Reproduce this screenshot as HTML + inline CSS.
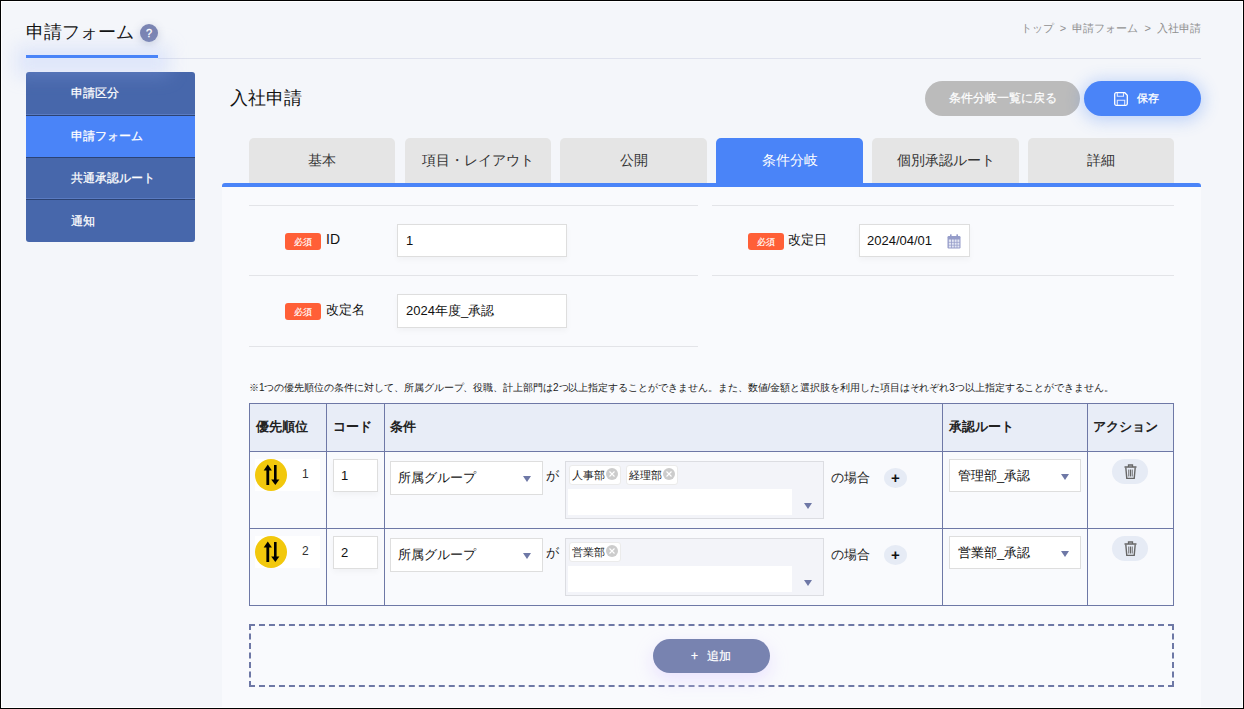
<!DOCTYPE html>
<html><head><meta charset="utf-8">
<style>
*{box-sizing:border-box;margin:0;padding:0}
html,body{width:1244px;height:709px;overflow:hidden}
body{font-family:"Liberation Sans",sans-serif;background:#f4f6fa;position:relative;color:#222}
.frame{position:absolute;left:0;top:0;width:1244px;height:709px;border:1px solid #000;z-index:50;pointer-events:none}
.frame2{position:absolute;left:1px;top:1px;width:1242px;height:707px;border:1px solid #fff;z-index:50}
.a{position:absolute;white-space:nowrap}
.inp{background:#fff;border:1px solid #dedede;color:#111;box-shadow:0 3px 6px rgba(0,0,0,.035)}
</style></head><body>
<div class="frame"></div><div class="frame2"></div>

<!-- header -->
<div class="a" style="left:26px;top:21px;font-size:18px;line-height:22px;color:#111">申請フォーム</div>
<div class="a" style="left:140px;top:24px;width:18px;height:18px;border-radius:50%;background:#7a84b2;color:#fff;font-size:11px;-webkit-text-stroke:0.3px #fff;text-align:center;line-height:18px;box-shadow:0 2px 8px rgba(80,90,140,.25)">?</div>
<div class="a" style="left:158px;top:58px;width:1043px;height:1px;background:#dfe2ee"></div>
<div class="a" style="left:26px;top:55px;width:132px;height:3px;background:#4a84f8;z-index:5"></div>
<div class="a" style="left:16px;top:46px;width:154px;height:30px;background:rgba(160,185,250,.25);filter:blur(9px);z-index:4"></div>
<div class="a" style="right:43px;top:20px;font-size:11px;line-height:16px;color:#909090">トップ &nbsp;&gt;&nbsp; 申請フォーム &nbsp;&gt;&nbsp; 入社申請</div>

<!-- sidebar -->
<div class="a" style="left:26px;top:72px;width:169px;height:170px;background:#4767ab;border-radius:3px;overflow:hidden">
  <div class="a" style="left:0;top:0;width:169px;height:44px;border-bottom:1px solid #2c4374;box-shadow:inset 0 -1px 0 #5a7bc2;color:#fff;-webkit-text-stroke:0.25px #fff;font-size:12px;line-height:42px;padding-left:45px">申請区分</div>
  <div class="a" style="left:0;top:44px;width:169px;height:42px;background:#4a84f8;border-bottom:1px solid #2c4374;color:#fff;-webkit-text-stroke:0.25px #fff;font-size:12px;line-height:41px;padding-left:45px">申請フォーム</div>
  <div class="a" style="left:0;top:86px;width:169px;height:42px;border-bottom:1px solid #2c4374;box-shadow:inset 0 -1px 0 #5a7bc2;color:#fff;-webkit-text-stroke:0.25px #fff;font-size:12px;line-height:41px;padding-left:45px">共通承認ルート</div>
  <div class="a" style="left:0;top:128px;width:169px;height:42px;color:#fff;-webkit-text-stroke:0.25px #fff;font-size:12px;line-height:43px;padding-left:45px">通知</div>
</div>

<!-- page title -->
<div class="a" style="left:230px;top:87px;font-size:18px;line-height:22px;color:#111">入社申請</div>
<div class="a" style="left:925px;top:81px;width:155px;height:35px;border-radius:18px;background:#bbbbbb;color:#fff;-webkit-text-stroke:0.25px #fff;font-size:12px;line-height:35px;text-align:center;-webkit-text-stroke:0.2px #fff">条件分岐一覧に戻る</div>
<div class="a" style="left:1084px;top:81px;width:117px;height:35px;border-radius:18px;background:#4a84f8;color:#fff;font-size:11px;-webkit-text-stroke:0.3px #fff;line-height:35px;box-shadow:0 2px 16px 3px rgba(74,132,248,.3)">
  <svg style="position:absolute;left:30px;top:11px" width="14" height="14" viewBox="0 0 14 14"><path d="M2.2 0.7h8.6l2.5 2.5v8.6a1.5 1.5 0 0 1-1.5 1.5H2.2a1.5 1.5 0 0 1-1.5-1.5V2.2a1.5 1.5 0 0 1 1.5-1.5z" fill="none" stroke="#fff" stroke-width="1.3"/><path d="M3.3 1v3.2h6.2V1" fill="none" stroke="#dfe8ff" stroke-width="1.1"/><path d="M3.3 13V8.2h7.4V13" fill="none" stroke="#dfe8ff" stroke-width="1.1"/></svg>
  <span style="position:absolute;left:53px;top:0">保存</span>
</div>

<!-- tabs -->
<div class="a" style="left:249px;top:138px;width:146px;height:45px;background:#e5e5e5;border-radius:5px 5px 0 0;color:#333;font-size:14px;line-height:45px;text-align:center">基本</div>
<div class="a" style="left:405px;top:138px;width:146px;height:45px;background:#e5e5e5;border-radius:5px 5px 0 0;color:#333;font-size:14px;line-height:45px;text-align:center">項目・レイアウト</div>
<div class="a" style="left:560px;top:138px;width:147px;height:45px;background:#e5e5e5;border-radius:5px 5px 0 0;color:#333;font-size:14px;line-height:45px;text-align:center">公開</div>
<div class="a" style="left:716px;top:138px;width:147px;height:45px;background:#4a84f8;border-radius:5px 5px 0 0;color:#fff;font-size:14px;line-height:45px;text-align:center">条件分岐</div>
<div class="a" style="left:872px;top:138px;width:147px;height:45px;background:#e5e5e5;border-radius:5px 5px 0 0;color:#333;font-size:14px;line-height:45px;text-align:center">個別承認ルート</div>
<div class="a" style="left:1028px;top:138px;width:146px;height:45px;background:#e5e5e5;border-radius:5px 5px 0 0;color:#333;font-size:14px;line-height:45px;text-align:center">詳細</div>


<!-- content panel -->
<div class="a" style="left:222px;top:183px;width:979px;height:530px;background:#f9fafd;border-top:4px solid #4a84f8;border-radius:3px 3px 0 0"></div>

<!-- form rows -->
<div class="a" style="left:249px;top:205px;width:449px;height:1px;background:#e3e4e8"></div>
<div class="a" style="left:249px;top:275px;width:449px;height:1px;background:#e3e4e8"></div>
<div class="a" style="left:249px;top:346px;width:449px;height:1px;background:#e3e4e8"></div>
<div class="a" style="left:712px;top:205px;width:462px;height:1px;background:#e3e4e8"></div>
<div class="a" style="left:712px;top:275px;width:462px;height:1px;background:#e3e4e8"></div>
<div class="a" style="left:285px;top:233px;width:36px;height:17px;background:#ff5f37;border-radius:3px;color:#fff;-webkit-text-stroke:0.15px #fff;font-size:9px;line-height:19px;text-align:center">必須</div>
<div class="a" style="left:326px;top:230px;font-size:14px;line-height:18px;color:#111">ID</div>
<div class="a inp" style="left:397px;top:224px;width:170px;height:33px;font-size:13px;line-height:31px;padding-left:8px">1</div>
<div class="a" style="left:285px;top:303px;width:36px;height:17px;background:#ff5f37;border-radius:3px;color:#fff;-webkit-text-stroke:0.15px #fff;font-size:9px;line-height:19px;text-align:center">必須</div>
<div class="a" style="left:326px;top:301px;font-size:13px;line-height:18px;color:#111">改定名</div>
<div class="a inp" style="left:397px;top:294px;width:170px;height:34px;font-size:13px;line-height:32px;padding-left:8px">2024年度_承認</div>
<div class="a" style="left:748px;top:233px;width:36px;height:17px;background:#ff5f37;border-radius:3px;color:#fff;-webkit-text-stroke:0.15px #fff;font-size:9px;line-height:19px;text-align:center">必須</div>
<div class="a" style="left:788px;top:231px;font-size:13px;line-height:18px;color:#111">改定日</div>
<div class="a inp" style="left:859px;top:224px;width:111px;height:33px;font-size:13px;line-height:31px;padding-left:7px">2024/04/01
<svg style="position:absolute;left:87px;top:9px" width="14" height="15" viewBox="0 0 14 15"><rect x="0.5" y="2" width="13" height="12.5" rx="1.2" fill="#959cc9"/><rect x="3" y="0.3" width="1.6" height="3" rx=".5" fill="#959cc9"/><rect x="9.4" y="0.3" width="1.6" height="3" rx=".5" fill="#959cc9"/><g fill="#e3e6f3"><rect x="1.8" y="5.5" width="2.2" height="2.4"/><rect x="4.8" y="5.5" width="2" height="2.4"/><rect x="7.6" y="5.5" width="2" height="2.4"/><rect x="10.4" y="5.5" width="2" height="2.4"/><rect x="1.8" y="8.6" width="2.2" height="2.2"/><rect x="4.8" y="8.6" width="2" height="2.2"/><rect x="7.6" y="8.6" width="2" height="2.2"/><rect x="10.4" y="8.6" width="2" height="2.2"/><rect x="1.8" y="11.5" width="2.2" height="2"/><rect x="4.8" y="11.5" width="2" height="2"/><rect x="7.6" y="11.5" width="2" height="2"/><rect x="10.4" y="11.5" width="2" height="2"/></g></svg></div>

<div class="a" style="left:249px;top:381px;font-size:10px;line-height:13px;color:#222;letter-spacing:-0.05px">※1つの優先順位の条件に対して、所属グループ、役職、計上部門は2つ以上指定することができません。また、数値/金額と選択肢を利用した項目はそれぞれ3つ以上指定することができません。</div>

<!-- table -->
<div class="a" style="left:249px;top:403px;width:925px;height:48px;background:#e8edf7"></div>
<div class="a" style="left:249px;top:403px;width:925px;height:1px;background:#6e78a6"></div>
<div class="a" style="left:249px;top:451px;width:925px;height:1px;background:#6e78a6"></div>
<div class="a" style="left:249px;top:528px;width:925px;height:1px;background:#6e78a6"></div>
<div class="a" style="left:249px;top:605px;width:925px;height:1px;background:#6e78a6"></div>
<div class="a" style="left:249px;top:403px;width:1px;height:203px;background:#6e78a6"></div>
<div class="a" style="left:326px;top:403px;width:1px;height:203px;background:#6e78a6"></div>
<div class="a" style="left:384px;top:403px;width:1px;height:203px;background:#6e78a6"></div>
<div class="a" style="left:942px;top:403px;width:1px;height:203px;background:#6e78a6"></div>
<div class="a" style="left:1087px;top:403px;width:1px;height:203px;background:#6e78a6"></div>
<div class="a" style="left:1173px;top:403px;width:1px;height:203px;background:#6e78a6"></div>
<div class="a" style="left:256px;top:419px;font-size:13px;line-height:16px;font-weight:bold;color:#222">優先順位</div>
<div class="a" style="left:333px;top:419px;font-size:13px;line-height:16px;font-weight:bold;color:#222">コード</div>
<div class="a" style="left:390px;top:419px;font-size:13px;line-height:16px;font-weight:bold;color:#222">条件</div>
<div class="a" style="left:949px;top:419px;font-size:13px;line-height:16px;font-weight:bold;color:#222">承認ルート</div>
<div class="a" style="left:1093px;top:419px;font-size:13px;line-height:16px;font-weight:bold;color:#222">アクション</div>
<div class="a" style="left:255px;top:459px;width:65px;height:32px;background:#fff"></div>
<div class="a" style="left:255px;top:459px;width:32px;height:32px;border-radius:50%;background:#f2c80c">
<svg style="position:absolute;left:0;top:0" width="32" height="32" viewBox="0 0 32 32"><g fill="#000"><rect x="11.4" y="10" width="2.8" height="16"/><path d="M12.8 5.4L8.7 11.4h8.2z"/><rect x="19" y="6" width="2.6" height="16"/><path d="M20.3 25.9L16.2 20.6h8.2z"/></g></svg></div>
<div class="a" style="left:302px;top:466px;font-size:12px;line-height:16px;color:#333">1</div>
<div class="a inp" style="left:333px;top:459px;width:45px;height:33px;font-size:13px;line-height:31px;padding-left:7px">1</div>
<div class="a inp" style="left:390px;top:461px;width:153px;height:34px;font-size:13px;line-height:32px;padding-left:7px;box-shadow:none">所属グループ<span style="position:absolute;left:132px;top:14px;line-height:0"><svg width="8" height="6" viewBox="0 0 8 6"><path d="M0 0h8L4 6z" fill="#6e78a6"/></svg></span></div>
<div class="a" style="left:546px;top:468px;font-size:13px;line-height:16px;color:#222">が</div>
<div class="a" style="left:565px;top:461px;width:259px;height:58px;background:#f3f4f9;border:1px solid #dcdde2">
<div class="a" style="left:2px;top:27px;width:224px;height:26px;background:#fff"></div>
<span class="a" style="left:238px;top:41px;line-height:0"><svg width="8" height="6" viewBox="0 0 8 6"><path d="M0 0h8L4 6z" fill="#6e78a6"/></svg></span>
<div class="a" style="left:3px;top:3px;width:52px;height:20px;background:#fff;border:1px solid #ebebeb;border-radius:3px;font-size:11px;line-height:19px;padding-left:2px;color:#222">人事部<svg width="12" height="12" viewBox="0 0 12 12" style="position:absolute;right:2px;top:2px"><circle cx="6" cy="6" r="6" fill="#cccccc"/><path d="M3.5 3.5l5 5M8.5 3.5l-5 5" stroke="#fff" stroke-width="1.1"/></svg></div>
<div class="a" style="left:60px;top:3px;width:52px;height:20px;background:#fff;border:1px solid #ebebeb;border-radius:3px;font-size:11px;line-height:19px;padding-left:2px;color:#222">経理部<svg width="12" height="12" viewBox="0 0 12 12" style="position:absolute;right:2px;top:2px"><circle cx="6" cy="6" r="6" fill="#cccccc"/><path d="M3.5 3.5l5 5M8.5 3.5l-5 5" stroke="#fff" stroke-width="1.1"/></svg></div>
</div>
<div class="a" style="left:831px;top:470px;font-size:13px;line-height:16px;color:#222">の場合</div>
<div class="a" style="left:884px;top:468px;width:23px;height:20px;border-radius:50%;background:#e6ebf5;font-size:15px;line-height:20px;text-align:center;font-weight:bold;color:#111">+</div>
<div class="a inp" style="left:949px;top:459px;width:132px;height:33px;font-size:13px;line-height:31px;padding-left:8px;box-shadow:none">管理部_承認<span style="position:absolute;left:111px;top:14px;line-height:0"><svg width="8" height="6" viewBox="0 0 8 6"><path d="M0 0h8L4 6z" fill="#6e78a6"/></svg></span></div>
<div class="a" style="left:1112px;top:459px;width:36px;height:25px;border-radius:13px;background:#e6ebf5">
<svg style="position:absolute;left:12px;top:5px" width="13" height="15" viewBox="0 0 13 15"><path d="M0.5 3h12M4.5 3V1h4v2" fill="none" stroke="#666" stroke-width="1.3"/><path d="M1.8 3.5l1 11h7.4l1-11" fill="none" stroke="#666" stroke-width="1.4"/><path d="M4.8 5.5v7M6.5 5.5v7M8.2 5.5v7" stroke="#666" stroke-width="1"/></svg></div>
<div class="a" style="left:255px;top:536px;width:65px;height:32px;background:#fff"></div>
<div class="a" style="left:255px;top:536px;width:32px;height:32px;border-radius:50%;background:#f2c80c">
<svg style="position:absolute;left:0;top:0" width="32" height="32" viewBox="0 0 32 32"><g fill="#000"><rect x="11.4" y="10" width="2.8" height="16"/><path d="M12.8 5.4L8.7 11.4h8.2z"/><rect x="19" y="6" width="2.6" height="16"/><path d="M20.3 25.9L16.2 20.6h8.2z"/></g></svg></div>
<div class="a" style="left:302px;top:543px;font-size:12px;line-height:16px;color:#333">2</div>
<div class="a inp" style="left:333px;top:536px;width:45px;height:33px;font-size:13px;line-height:31px;padding-left:7px">2</div>
<div class="a inp" style="left:390px;top:538px;width:153px;height:34px;font-size:13px;line-height:32px;padding-left:7px;box-shadow:none">所属グループ<span style="position:absolute;left:132px;top:14px;line-height:0"><svg width="8" height="6" viewBox="0 0 8 6"><path d="M0 0h8L4 6z" fill="#6e78a6"/></svg></span></div>
<div class="a" style="left:546px;top:545px;font-size:13px;line-height:16px;color:#222">が</div>
<div class="a" style="left:565px;top:538px;width:259px;height:58px;background:#f3f4f9;border:1px solid #dcdde2">
<div class="a" style="left:2px;top:27px;width:224px;height:26px;background:#fff"></div>
<span class="a" style="left:238px;top:41px;line-height:0"><svg width="8" height="6" viewBox="0 0 8 6"><path d="M0 0h8L4 6z" fill="#6e78a6"/></svg></span>
<div class="a" style="left:3px;top:3px;width:52px;height:20px;background:#fff;border:1px solid #ebebeb;border-radius:3px;font-size:11px;line-height:19px;padding-left:2px;color:#222">営業部<svg width="12" height="12" viewBox="0 0 12 12" style="position:absolute;right:2px;top:2px"><circle cx="6" cy="6" r="6" fill="#cccccc"/><path d="M3.5 3.5l5 5M8.5 3.5l-5 5" stroke="#fff" stroke-width="1.1"/></svg></div>
</div>
<div class="a" style="left:831px;top:547px;font-size:13px;line-height:16px;color:#222">の場合</div>
<div class="a" style="left:884px;top:545px;width:23px;height:20px;border-radius:50%;background:#e6ebf5;font-size:15px;line-height:20px;text-align:center;font-weight:bold;color:#111">+</div>
<div class="a inp" style="left:949px;top:536px;width:132px;height:33px;font-size:13px;line-height:31px;padding-left:8px;box-shadow:none">営業部_承認<span style="position:absolute;left:111px;top:14px;line-height:0"><svg width="8" height="6" viewBox="0 0 8 6"><path d="M0 0h8L4 6z" fill="#6e78a6"/></svg></span></div>
<div class="a" style="left:1112px;top:536px;width:36px;height:25px;border-radius:13px;background:#e6ebf5">
<svg style="position:absolute;left:12px;top:5px" width="13" height="15" viewBox="0 0 13 15"><path d="M0.5 3h12M4.5 3V1h4v2" fill="none" stroke="#666" stroke-width="1.3"/><path d="M1.8 3.5l1 11h7.4l1-11" fill="none" stroke="#666" stroke-width="1.4"/><path d="M4.8 5.5v7M6.5 5.5v7M8.2 5.5v7" stroke="#666" stroke-width="1"/></svg></div>

<!-- add -->
<div class="a" style="left:249px;top:624px;width:925px;height:63px;border:2px dashed #6e78a6"></div>
<div class="a" style="left:653px;top:639px;width:117px;height:34px;border-radius:17px;background:#7883b0;color:#fff;-webkit-text-stroke:0.25px #fff;font-size:12px;line-height:34px;text-align:center;box-shadow:0 7px 18px rgba(228,218,255,.75)"><span class="a" style="left:38px;top:0;font-size:12px">+</span><span class="a" style="left:54px;top:0;-webkit-text-stroke:0.2px #fff">追加</span></div>

</body></html>
